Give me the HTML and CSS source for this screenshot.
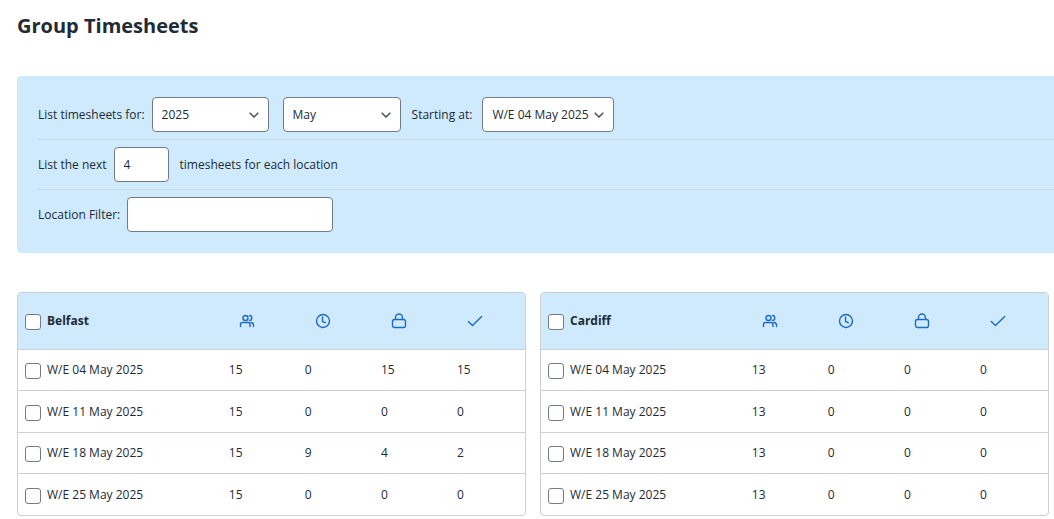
FILE: index.html
```html
<!DOCTYPE html>
<html lang="en">
<head>
<meta charset="utf-8">
<meta name="viewport" content="width=device-width, initial-scale=1">
<title>Group Timesheets</title>
<link rel="stylesheet" href="styles.css">
</head>
<body>
<svg class="sprite" aria-hidden="true">
  <symbol id="i-users" viewBox="0 0 16 16"><circle cx="6.5" cy="5" r="2.5"/><path d="M1.5 13.5V11.500Q1.500 9.500 3.500 9.500H9Q11 9.500 11 11.500V13.500M10.500 2.500C13.500 2.500 13.500 7.500 10.500 7.500M12 9.500Q14.500 9.800 14.500 12V13.500"/></symbol>
  <symbol id="i-clock" viewBox="0 0 16 16"><circle cx="8" cy="8" r="6.500"/><path d="M7.500 4V8.500L10.300 9.700"/></symbol>
  <symbol id="i-lock" viewBox="0 0 16 16"><rect x="1.500" y="6.500" width="13" height="8" rx="2"/><path d="M4.500 6.500V4.500a3.500 3.500 0 0 1 7 0V6.500"/></symbol>
  <symbol id="i-check" viewBox="0 0 16 16"><path d="M1.300 8.500L5.500 12.500L14.700 3.500"/></symbol>
</svg>
<main class="page">
  <h1 class="title">Group Timesheets</h1>
  <form class="filters">
    <div class="filter-row">
      <label for="year">List timesheets for:</label>
      <select id="year" class="control select"><option>2025</option></select>
      <select class="control select month" aria-label="Month"><option>May</option></select>
      <label for="start" class="start-label">Starting at:</label>
      <select id="start" class="control select start"><option>W/E 04 May 2025</option></select>
    </div>
    <div class="filter-row">
      <label for="count">List the next</label>
      <input id="count" class="control count" type="text" value="4">
      <span class="suffix">timesheets for each location</span>
    </div>
    <div class="filter-row">
      <label for="location">Location Filter:</label>
      <input id="location" class="control location" type="text">
    </div>
  </form>
  <div class="locations">
    <div class="card">
      <table class="sheet">
        <thead><tr>
          <th class="name"><label class="pick"><input type="checkbox" class="check"><span>Belfast</span></label></th>
          <th><svg class="icon" role="img" aria-label="Employees"><use href="#i-users"/></svg></th>
          <th><svg class="icon" role="img" aria-label="Pending"><use href="#i-clock"/></svg></th>
          <th><svg class="icon" role="img" aria-label="Locked"><use href="#i-lock"/></svg></th>
          <th><svg class="icon" role="img" aria-label="Approved"><use href="#i-check"/></svg></th>
        </tr></thead>
        <tbody>
          <tr><td class="name"><label class="pick"><input type="checkbox" class="check"><span>W/E 04 May 2025</span></label></td><td>15</td><td>0</td><td>15</td><td>15</td></tr>
          <tr><td class="name"><label class="pick"><input type="checkbox" class="check"><span>W/E 11 May 2025</span></label></td><td>15</td><td>0</td><td>0</td><td>0</td></tr>
          <tr><td class="name"><label class="pick"><input type="checkbox" class="check"><span>W/E 18 May 2025</span></label></td><td>15</td><td>9</td><td>4</td><td>2</td></tr>
          <tr><td class="name"><label class="pick"><input type="checkbox" class="check"><span>W/E 25 May 2025</span></label></td><td>15</td><td>0</td><td>0</td><td>0</td></tr>
        </tbody>
      </table>
    </div>
    <div class="card">
      <table class="sheet">
        <thead><tr>
          <th class="name"><label class="pick"><input type="checkbox" class="check"><span>Cardiff</span></label></th>
          <th><svg class="icon" role="img" aria-label="Employees"><use href="#i-users"/></svg></th>
          <th><svg class="icon" role="img" aria-label="Pending"><use href="#i-clock"/></svg></th>
          <th><svg class="icon" role="img" aria-label="Locked"><use href="#i-lock"/></svg></th>
          <th><svg class="icon" role="img" aria-label="Approved"><use href="#i-check"/></svg></th>
        </tr></thead>
        <tbody>
          <tr><td class="name"><label class="pick"><input type="checkbox" class="check"><span>W/E 04 May 2025</span></label></td><td>13</td><td>0</td><td>0</td><td>0</td></tr>
          <tr><td class="name"><label class="pick"><input type="checkbox" class="check"><span>W/E 11 May 2025</span></label></td><td>13</td><td>0</td><td>0</td><td>0</td></tr>
          <tr><td class="name"><label class="pick"><input type="checkbox" class="check"><span>W/E 18 May 2025</span></label></td><td>13</td><td>0</td><td>0</td><td>0</td></tr>
          <tr><td class="name"><label class="pick"><input type="checkbox" class="check"><span>W/E 25 May 2025</span></label></td><td>13</td><td>0</td><td>0</td><td>0</td></tr>
        </tbody>
      </table>
    </div>
  </div>
</main>
</body>
</html>
```
FILE: styles.css
```css
*, *::before, *::after { box-sizing: border-box; }

body {
  margin: 0;
  background: #fff;
  color: #212b36;
  font: 12px/18px "Open Sans", "Noto Sans", sans-serif;
}

.sprite { display: none; }

.page { padding: 12px 0 3px 17px; }

.title {
  margin: 0 0 36px;
  font-size: 20px;
  line-height: 28px;
  font-weight: 700;
}

.filters {
  padding: 21px 0 21px 21px;
  background: #cfeafd;
  border-radius: 4px 0 0 4px;
}

.filter-row {
  display: flex;
  align-items: center;
  padding: 7px 0;
  border-bottom: 1px solid #c5d8e3;
}
.filter-row:first-child { padding-top: 0; }
.filter-row:last-child { padding-bottom: 0; border-bottom: 0; }

.control {
  height: 35px;
  margin: 0 0 0 7px;
  padding: 0 9px;
  border: 1px solid #737b83;
  border-radius: 4px;
  background-color: #fff;
  color: inherit;
  font: inherit;
}

.select {
  width: 117px;
  appearance: none;
  background-image: url("data:image/svg+xml,%3Csvg xmlns='http://www.w3.org/2000/svg' width='10' height='6' fill='none' stroke='%234a535c' stroke-width='1.5'%3E%3Cpath d='M.7 .7 5 5 9.300 .7'/%3E%3C/svg%3E");
  background-repeat: no-repeat;
  background-position: right 9px center;
}
.month { width: 118px; margin-left: 14px; }
.start-label { margin-left: 11px; }
.start { width: 132px; margin-left: 10px; padding-right: 20px; }
.count { width: 55px; }
.location { width: 206px; }
.suffix { margin-left: 11px; }

.locations {
  display: grid;
  grid-template-columns: 1fr 1fr;
  gap: 14px;
  margin: 39px 5px 0 0;
}

.card {
  overflow: hidden;
  border: 1px solid #cbd0d4;
  border-radius: 4px;
}

.sheet {
  width: 100%;
  table-layout: fixed;
  border-collapse: separate;
  border-spacing: 0;
}

.sheet th,
.sheet td {
  padding: 0 8px;
  text-align: left;
  vertical-align: middle;
}
.sheet th {
  width: 15%;
  height: 57px;
  background: #cfeafd;
  border-bottom: 1px solid #cbd0d4;
}
.sheet th.name { width: 40%; }
.sheet th:not(.name) { padding-left: 18px; }
.sheet .name { padding-left: 7px; }
.sheet td { height: 41px; border-bottom: 1px solid #cbd0d4; }
.sheet tr:nth-child(2) td { height: 42px; }
.sheet tr:last-child td { border-bottom: 0; }

.pick {
  display: flex;
  align-items: center;
  gap: 6px;
}

.check {
  appearance: none;
  flex: none;
  width: 16px;
  height: 16px;
  margin: 2px 0 0;
  border: 1px solid #737b83;
  border-radius: 3px;
  background: #fff;
}
.check:checked { background: #1f6bbd; }

.icon {
  display: block;
  width: 16px;
  height: 16px;
  fill: none;
  stroke: #1f6bc0;
  stroke-width: 1.4;
  stroke-linecap: round;
  stroke-linejoin: round;
}
```
